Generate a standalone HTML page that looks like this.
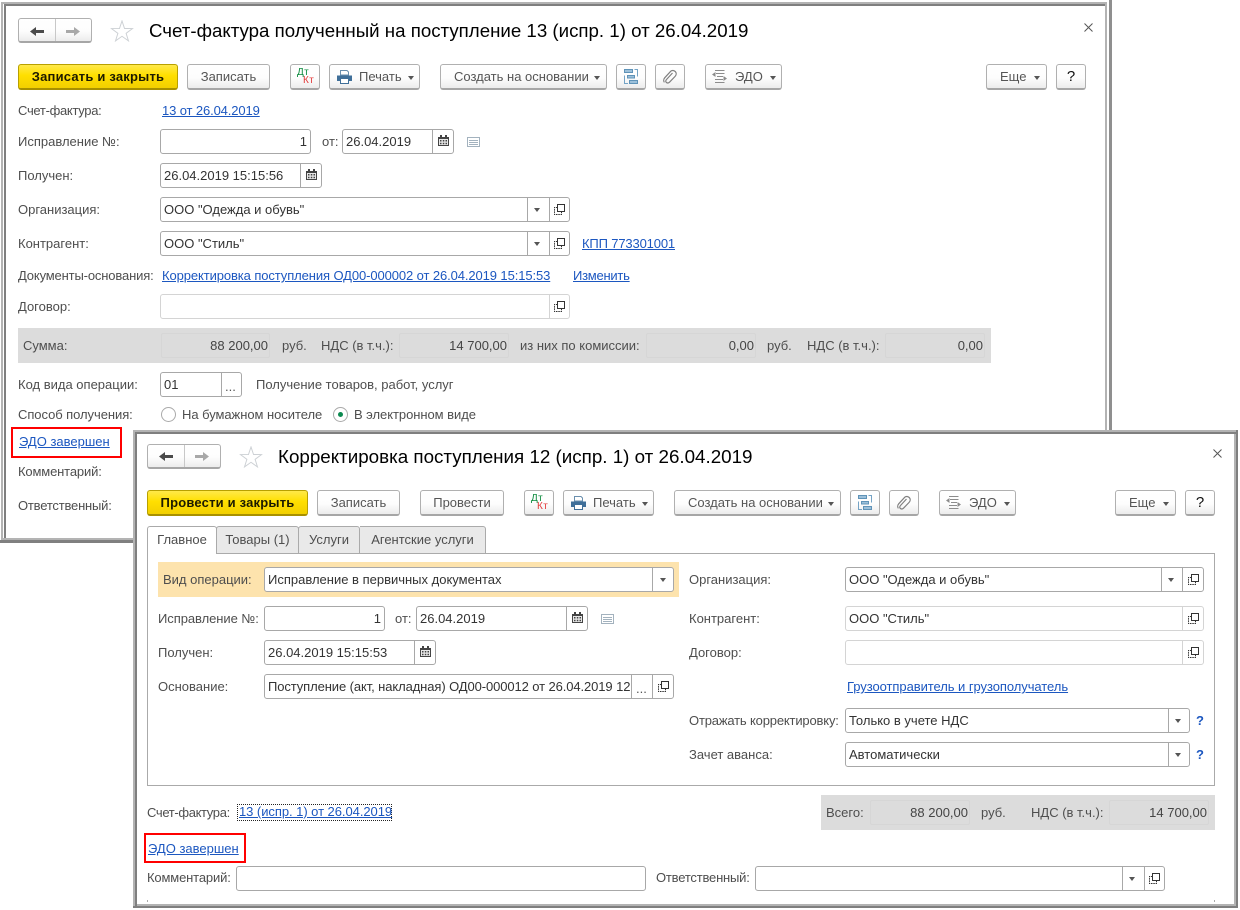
<!DOCTYPE html>
<html lang="ru"><head><meta charset="utf-8"><title>ЭДО</title>
<style>
html,body{margin:0;padding:0;background:#fff}
body{width:1240px;height:910px;position:relative;overflow:hidden;font:13px/16px "Liberation Sans",Arial,sans-serif;color:#4e4e4e}
div,a,span.t{position:absolute;box-sizing:border-box;white-space:nowrap}
svg{position:absolute;overflow:visible}
.r{position:absolute}
.t{height:16px;margin-top:1px}
.l{color:#1c57c0;text-decoration:underline;position:absolute;height:16px;white-space:nowrap;margin-top:1px}
.h{font-size:18.75px;line-height:22px;color:#000;height:22px;margin-top:0}
.b{height:26px;border:1px solid #b0b0b0;border-bottom:2px solid #a6a6a6;border-radius:3px;background:linear-gradient(#fff 0,#fdfdfd 55%,#ececec 100%);text-align:center;line-height:24px;color:#555}
.y{border-color:#b8a000;border-bottom-color:#a89000;background:linear-gradient(#ffe94a 0,#ffdf00 45%,#f2cf00 100%);color:#1c1a00;font-weight:bold;letter-spacing:.2px}
.q{font-size:15px;color:#111}
.i{height:25px;border:1px solid #a8a8a8;border-radius:3px;background:#fff;line-height:23px;color:#333;padding:0 3px;overflow:hidden}
.p{border-color:#d4d4d4}
.s{top:0;bottom:0;width:1px;background:#a8a8a8}
.a{width:0;height:0;border:3.5px solid transparent;border-top:4px solid #555;border-bottom:0}
.v{height:25px;border:1px solid #d6d6d6;border-radius:2px;background:#dcdcdc;line-height:23px;text-align:right;padding-right:1px;color:#444}
.g{background:#dcdcdc}
.red{border:2px solid #f00}
.dt{font:10px/10px "Liberation Sans",sans-serif;color:#0a8a3c;letter-spacing:.4px}
.kt{font:10px/10px "Liberation Sans",sans-serif;color:#e23a3a;letter-spacing:.4px}
</style></head><body>
<svg width="0" height="0" style="position:absolute"><defs>
<symbol id="star" viewBox="0 0 24 24"><path d="M12 1L14.650 8.860 22.940 8.950 16.280 13.890 18.760 21.800 12 17 5.240 21.800 7.720 13.890 1.060 8.950 9.350 8.860z" fill="#fff" stroke="#ccd0d4" stroke-width="1"/></symbol>
<symbol id="cal" viewBox="0 0 11 11"><path d="M0 2h11v9H0z" fill="#444"/><path d="M1 4h9v6H1z" fill="#e8e8e8"/><path d="M2 0h2v3H2zM7 0h2v3H7z" fill="#444"/><path d="M2 5h1.500v1.500H2zM4.800 5h1.500v1.500H4.800zM7.500 5H9v1.500H7.500zM2 7.800h1.500v1.500H2zM4.800 7.800h1.500v1.500H4.800zM7.500 7.800H9v1.500H7.500z" fill="#444"/></symbol>
<symbol id="memo" viewBox="0 0 13 10"><path d="M.5.500h12v9H.5z" fill="#fff" stroke="#a3b2be"/><path d="M2 3.500h9M2 5.500h9M2 7.500h9" stroke="#a3b2be"/></symbol>
<symbol id="open" viewBox="0 0 11 11"><path d="M3.500.5h7v7h-7z" fill="none" stroke="#333"/><path d="M3.500 3.500H.5v7h7v-3" fill="none" stroke="#333" stroke-dasharray="1.500 .8"/></symbol>
<symbol id="print" viewBox="0 0 15 14"><path d="M3.500.5h6.500l1.500 1.500v3h-8z" fill="#fff" stroke="#6a8fae"/><path d="M0 5.500h15v5.500H0z" fill="#3f6f99"/><path d="M3.500 8.500h8v5h-8z" fill="#fff" stroke="#3f6f99"/></symbol>
<symbol id="struct" viewBox="0 0 14 15"><path d="M10.500.5h3v7M.5 6.500v8h3.500" fill="none" stroke="#74a3c5"/><path d="M.5.500h8v3h-8zM5.500 11.500h8v3h-8z" fill="#9cc0da" stroke="#5f93b8"/><path d="M3.500 6.500h7v2.500h-7z" fill="#9cc0da" stroke="#5f93b8"/></symbol>
<symbol id="clip" viewBox="0 0 14 15"><path d="M9.500 4L3.500 10.500c-1 1-1 2.300-.1 3s2.200.6 3.100-.3L12 7.500c1.500-1.500 1.500-3.500.4-4.800S9 1 7.800 2.200L1.800 8.700c-1.500 1.700-1.300 3.600-.4 4.700" fill="none" stroke="#808080" stroke-width="1.200"/></symbol>
<symbol id="edo" viewBox="0 0 15 14"><path d="M3 .5h9.500M4 3.500h8.500M5 6.500h6M3 9.500h8M3 12.500h9.500" stroke="#8c8c8c"/><path d="M0 4.500L3.500 2v5zM15 8.500L11.500 6v5z" fill="#8c8c8c"/></symbol>
</defs></svg>

<!-- ОКНО 1 -->
<div style="left:1px;top:2px;width:1106px;height:538px;border:2px solid #b3b3b3;border-bottom:0"></div>
<div class="r" style="left:4px;top:4px;width:1101px;height:2px;background:#7f7f7f"></div>
<div class="r" style="left:4px;top:4px;width:2px;height:536px;background:#7f7f7f"></div>
<div class="r" style="left:1109px;top:0;width:3px;height:432px;background:#8f8f8f"></div>
<div class="r" style="left:1px;top:538px;width:132px;height:2px;background:#b3b3b3"></div>
<div class="r" style="left:0;top:540px;width:133px;height:3px;background:#808080"></div>

<div class="b" style="left:18px;top:18px;width:74px;height:25px"></div>
<div class="r" style="left:55px;top:19px;width:1px;height:22px;background:#c8c8c8"></div>
<svg style="left:30px;top:27px" width="14" height="9"><path d="M0 4.500L6 0v3h8v3H6v3z" fill="#4a4a4a"/></svg>
<svg style="left:66px;top:27px" width="14" height="9"><path d="M14 4.500L8 0v3H0v3h8v3z" fill="#a8a8a8"/></svg>
<svg style="left:110px;top:20px" width="24" height="23"><use href="#star"/></svg>
<span class="t h" style="left:149px;top:20px;font-size:18.69px">Счет-фактура полученный на поступление 13 (испр. 1) от 26.04.2019</span>
<svg style="left:1084px;top:23px" width="9" height="9"><path d="M.5.500l8 8M8.500.5l-8 8" stroke="#555"/></svg>

<div class="b y" style="left:18px;top:64px;width:160px">Записать и закрыть</div>
<div class="b" style="left:187px;top:64px;width:83px">Записать</div>
<div class="b" style="left:290px;top:64px;width:30px"></div>
<span class="t dt" style="left:297px;top:67px">Дт</span>
<span class="t kt" style="left:303px;top:75px">Кт</span>
<div class="b" style="left:329px;top:64px;width:91px;text-align:left;padding-left:29px">Печать</div>
<svg style="left:337px;top:70px" width="15" height="14"><use href="#print"/></svg>
<div class="a" style="left:408px;top:76px"></div>
<div class="b" style="left:440px;top:64px;width:167px;text-align:left;padding-left:13px">Создать на основании</div>
<div class="a" style="left:594px;top:76px"></div>
<div class="b" style="left:616px;top:64px;width:30px"></div>
<svg style="left:624px;top:69px" width="14" height="15"><use href="#struct"/></svg>
<div class="b" style="left:655px;top:64px;width:30px"></div>
<svg style="left:663px;top:69px" width="14" height="15"><use href="#clip"/></svg>
<div class="b" style="left:705px;top:64px;width:77px;text-align:left;padding-left:29px">ЭДО</div>
<svg style="left:712px;top:70px" width="15" height="14"><use href="#edo"/></svg>
<div class="a" style="left:770px;top:76px"></div>
<div class="b" style="left:986px;top:64px;width:61px;text-align:left;padding-left:13px">Еще</div>
<div class="a" style="left:1034px;top:76px"></div>
<div class="b q" style="left:1056px;top:64px;width:30px">?</div>

<span class="t" style="left:18px;top:102px;letter-spacing:-.3px">Счет-фактура:</span>
<a class="l" style="left:162px;top:102px;letter-spacing:-.12px">13 от 26.04.2019</a>

<span class="t" style="left:18px;top:133px">Исправление №:</span>
<div class="i" style="left:160px;top:129px;width:151px;text-align:right">1</div>
<span class="t" style="left:322px;top:133px">от:</span>
<div class="i" style="left:342px;top:129px;width:112px">26.04.2019<div class="s" style="left:89px"></div></div>
<svg style="left:438px;top:135px" width="11" height="11"><use href="#cal"/></svg>
<svg style="left:467px;top:137px" width="13" height="10"><use href="#memo"/></svg>

<span class="t" style="left:18px;top:167px">Получен:</span>
<div class="i" style="left:160px;top:163px;width:162px">26.04.2019 15:15:56<div class="s" style="left:139px"></div></div>
<svg style="left:306px;top:169px" width="11" height="11"><use href="#cal"/></svg>

<span class="t" style="left:18px;top:201px">Организация:</span>
<div class="i" style="left:160px;top:197px;width:410px">ООО "Одежда и обувь"<div class="s" style="left:366px"></div><div class="s" style="left:388px"></div></div>
<div class="a" style="left:534px;top:208px"></div>
<svg style="left:554px;top:204px" width="11" height="11"><use href="#open"/></svg>

<span class="t" style="left:18px;top:235px">Контрагент:</span>
<div class="i" style="left:160px;top:231px;width:410px">ООО "Стиль"<div class="s" style="left:366px"></div><div class="s" style="left:388px"></div></div>
<div class="a" style="left:534px;top:242px"></div>
<svg style="left:554px;top:238px" width="11" height="11"><use href="#open"/></svg>
<a class="l" style="left:582px;top:235px;letter-spacing:-.15px">КПП 773301001</a>

<span class="t" style="left:18px;top:267px;letter-spacing:-.15px">Документы-основания:</span>
<a class="l" style="left:162px;top:267px;letter-spacing:-.1px">Корректировка поступления ОД00-000002 от 26.04.2019 15:15:53</a>
<a class="l" style="left:573px;top:267px;letter-spacing:-.25px">Изменить</a>

<span class="t" style="left:18px;top:298px">Договор:</span>
<div class="i p" style="left:160px;top:294px;width:410px"><div class="s" style="left:388px;background:#d4d4d4"></div></div>
<svg style="left:554px;top:301px" width="11" height="11"><use href="#open"/></svg>

<div class="g" style="left:18px;top:328px;width:973px;height:35px"></div>
<span class="t" style="left:23px;top:337px">Сумма:</span>
<div class="v" style="left:161px;top:333px;width:109px">88 200,00</div>
<span class="t" style="left:282px;top:337px">руб.</span>
<span class="t" style="left:321px;top:337px">НДС (в т.ч.):</span>
<div class="v" style="left:399px;top:333px;width:110px">14 700,00</div>
<span class="t" style="left:520px;top:337px">из них по комиссии:</span>
<div class="v" style="left:646px;top:333px;width:110px">0,00</div>
<span class="t" style="left:767px;top:337px">руб.</span>
<span class="t" style="left:807px;top:337px">НДС (в т.ч.):</span>
<div class="v" style="left:885px;top:333px;width:100px">0,00</div>

<span class="t" style="left:18px;top:376px">Код вида операции:</span>
<div class="i" style="left:160px;top:372px;width:82px">01<div class="s" style="left:60px"></div></div>
<span class="t" style="left:225px;top:378px;color:#555">...</span>
<span class="t" style="left:256px;top:376px">Получение товаров, работ, услуг</span>

<span class="t" style="left:18px;top:406px;letter-spacing:-.06px">Способ получения:</span>
<div class="r" style="left:161px;top:407px;width:15px;height:15px;border:1px solid #aaa;border-radius:50%"></div>
<span class="t" style="left:182px;top:406px;letter-spacing:-.05px">На бумажном носителе</span>
<div class="r" style="left:333px;top:407px;width:15px;height:15px;border:1px solid #aaa;border-radius:50%"></div>
<div class="r" style="left:338px;top:412px;width:5px;height:5px;background:#0c8a50;border-radius:50%"></div>
<span class="t" style="left:354px;top:406px;letter-spacing:-.05px">В электронном виде</span>

<div class="red" style="left:11px;top:427px;width:111px;height:31px"></div>
<a class="l" style="left:19px;top:433px">ЭДО завершен</a>
<span class="t" style="left:18px;top:463px;letter-spacing:-.15px">Комментарий:</span>
<span class="t" style="left:18px;top:497px;letter-spacing:-.2px">Ответственный:</span>

<!-- ОКНО 2 -->
<div style="left:133px;top:430px;width:1105px;height:478px;background:#fff;border:2px solid #b3b3b3"></div>
<div class="r" style="left:135px;top:432px;width:1103px;height:2px;background:#7f7f7f"></div>
<div class="r" style="left:135px;top:432px;width:2px;height:476px;background:#7f7f7f"></div>
<div class="r" style="left:1236px;top:430px;width:2px;height:478px;background:#7f7f7f"></div>
<div class="r" style="left:133px;top:906px;width:1105px;height:2px;background:#7f7f7f"></div>
<div class="r" style="left:1234px;top:434px;width:2px;height:472px;background:#b3b3b3"></div>
<div class="r" style="left:137px;top:904px;width:1099px;height:2px;background:#b3b3b3"></div>

<div class="b" style="left:147px;top:444px;width:74px;height:25px"></div>
<div class="r" style="left:184px;top:445px;width:1px;height:22px;background:#c8c8c8"></div>
<svg style="left:159px;top:452px" width="14" height="9"><path d="M0 4.500L6 0v3h8v3H6v3z" fill="#4a4a4a"/></svg>
<svg style="left:195px;top:452px" width="14" height="9"><path d="M14 4.500L8 0v3H0v3h8v3z" fill="#a8a8a8"/></svg>
<svg style="left:239px;top:446px" width="24" height="23"><use href="#star"/></svg>
<span class="t h" style="left:278px;top:446px;font-size:18.8px">Корректировка поступления 12 (испр. 1) от 26.04.2019</span>
<svg style="left:1213px;top:449px" width="9" height="9"><path d="M.5.500l8 8M8.500.5l-8 8" stroke="#555"/></svg>

<div class="b y" style="left:147px;top:490px;width:161px">Провести и закрыть</div>
<div class="b" style="left:317px;top:490px;width:83px">Записать</div>
<div class="b" style="left:420px;top:490px;width:84px">Провести</div>
<div class="b" style="left:524px;top:490px;width:30px"></div>
<span class="t dt" style="left:531px;top:493px">Дт</span>
<span class="t kt" style="left:537px;top:501px">Кт</span>
<div class="b" style="left:563px;top:490px;width:91px;text-align:left;padding-left:29px">Печать</div>
<svg style="left:571px;top:496px" width="15" height="14"><use href="#print"/></svg>
<div class="a" style="left:642px;top:502px"></div>
<div class="b" style="left:674px;top:490px;width:167px;text-align:left;padding-left:13px">Создать на основании</div>
<div class="a" style="left:828px;top:502px"></div>
<div class="b" style="left:850px;top:490px;width:30px"></div>
<svg style="left:858px;top:495px" width="14" height="15"><use href="#struct"/></svg>
<div class="b" style="left:889px;top:490px;width:30px"></div>
<svg style="left:897px;top:495px" width="14" height="15"><use href="#clip"/></svg>
<div class="b" style="left:939px;top:490px;width:77px;text-align:left;padding-left:29px">ЭДО</div>
<svg style="left:946px;top:496px" width="15" height="14"><use href="#edo"/></svg>
<div class="a" style="left:1004px;top:502px"></div>
<div class="b" style="left:1115px;top:490px;width:61px;text-align:left;padding-left:13px">Еще</div>
<div class="a" style="left:1163px;top:502px"></div>
<div class="b q" style="left:1185px;top:490px;width:30px">?</div>

<div class="r" style="left:147px;top:553px;width:1068px;height:233px;border:1px solid #aaa"></div>
<div class="r" style="left:216px;top:526px;width:83px;height:28px;background:#e9e9e9;border:1px solid #aaa;border-radius:3px 3px 0 0;text-align:center;line-height:25px">Товары (1)</div>
<div class="r" style="left:298px;top:526px;width:62px;height:28px;background:#e9e9e9;border:1px solid #aaa;border-radius:3px 3px 0 0;text-align:center;line-height:25px">Услуги</div>
<div class="r" style="left:360px;top:526px;width:126px;height:28px;background:#e9e9e9;border:1px solid #aaa;border-left:0;border-radius:0 3px 0 0;text-align:center;line-height:25px">Агентские услуги</div>
<div class="r" style="left:147px;top:526px;width:70px;height:28px;background:#fff;border:1px solid #aaa;border-bottom:0;border-radius:3px 3px 0 0;text-align:center;line-height:25px">Главное</div>

<div class="r" style="left:158px;top:562px;width:521px;height:35px;background:#fde3ad"></div>
<span class="t" style="left:163px;top:571px">Вид операции:</span>
<div class="i" style="left:264px;top:567px;width:410px">Исправление в первичных документах<div class="s" style="left:387px"></div></div>
<div class="a" style="left:660px;top:578px"></div>
<span class="t" style="left:689px;top:571px">Организация:</span>
<div class="i" style="left:845px;top:567px;width:359px">ООО "Одежда и обувь"<div class="s" style="left:315px"></div><div class="s" style="left:336px"></div></div>
<div class="a" style="left:1168px;top:578px"></div>
<svg style="left:1188px;top:574px" width="11" height="11"><use href="#open"/></svg>

<span class="t" style="left:158px;top:610px;letter-spacing:-.06px">Исправление №:</span>
<div class="i" style="left:264px;top:606px;width:121px;text-align:right">1</div>
<span class="t" style="left:395px;top:610px">от:</span>
<div class="i" style="left:416px;top:606px;width:172px">26.04.2019<div class="s" style="left:149px"></div></div>
<svg style="left:572px;top:612px" width="11" height="11"><use href="#cal"/></svg>
<svg style="left:601px;top:614px" width="13" height="10"><use href="#memo"/></svg>
<span class="t" style="left:689px;top:610px">Контрагент:</span>
<div class="i p" style="left:845px;top:606px;width:359px">ООО "Стиль"<div class="s" style="left:336px;background:#d4d4d4"></div></div>
<svg style="left:1188px;top:613px" width="11" height="11"><use href="#open"/></svg>

<span class="t" style="left:158px;top:644px">Получен:</span>
<div class="i" style="left:264px;top:640px;width:172px">26.04.2019 15:15:53<div class="s" style="left:149px"></div></div>
<svg style="left:420px;top:646px" width="11" height="11"><use href="#cal"/></svg>
<span class="t" style="left:689px;top:644px">Договор:</span>
<div class="i p" style="left:845px;top:640px;width:359px"><div class="s" style="left:336px;background:#d4d4d4"></div></div>
<svg style="left:1188px;top:647px" width="11" height="11"><use href="#open"/></svg>

<span class="t" style="left:158px;top:678px">Основание:</span>
<div class="i" style="left:264px;top:674px;width:410px"><span style="display:block;width:363px;overflow:hidden;letter-spacing:-.1px">Поступление (акт, накладная) ОД00-000012 от 26.04.2019 12:00:00</span><div class="s" style="left:366px"></div><div class="s" style="left:387px"></div></div>
<span class="t" style="left:636px;top:680px;color:#555">...</span>
<svg style="left:658px;top:681px" width="11" height="11"><use href="#open"/></svg>
<a class="l" style="left:847px;top:678px;letter-spacing:-.06px">Грузоотправитель и грузополучатель</a>

<span class="t" style="left:689px;top:712px;letter-spacing:-.17px">Отражать корректировку:</span>
<div class="i" style="left:845px;top:708px;width:345px">Только в учете НДС<div class="s" style="left:322px"></div></div>
<div class="a" style="left:1175px;top:719px"></div>
<span class="t" style="left:1196px;top:712px;color:#1c57c0;font-weight:bold">?</span>
<span class="t" style="left:689px;top:746px">Зачет аванса:</span>
<div class="i" style="left:845px;top:742px;width:345px">Автоматически<div class="s" style="left:322px"></div></div>
<div class="a" style="left:1175px;top:753px"></div>
<span class="t" style="left:1196px;top:746px;color:#1c57c0;font-weight:bold">?</span>

<span class="t" style="left:147px;top:804px;letter-spacing:-.35px">Счет-фактура:</span>
<div class="r" style="left:237px;top:804px;width:155px;height:17px;border:1px dotted #222"></div>
<a class="l" style="left:239px;top:803px;letter-spacing:-.05px">13 (испр. 1) от 26.04.2019</a>
<div class="g" style="left:821px;top:795px;width:394px;height:35px"></div>
<span class="t" style="left:826px;top:804px">Всего:</span>
<div class="v" style="left:870px;top:800px;width:100px">88 200,00</div>
<span class="t" style="left:981px;top:804px">руб.</span>
<span class="t" style="left:1031px;top:804px">НДС (в т.ч.):</span>
<div class="v" style="left:1109px;top:800px;width:100px">14 700,00</div>

<div class="red" style="left:144px;top:833px;width:102px;height:30px"></div>
<a class="l" style="left:148px;top:840px">ЭДО завершен</a>

<span class="t" style="left:147px;top:869px;letter-spacing:-.15px">Комментарий:</span>
<div class="i" style="left:236px;top:866px;width:410px"></div>
<span class="t" style="left:656px;top:869px;letter-spacing:-.2px">Ответственный:</span>
<div class="i" style="left:755px;top:866px;width:410px"><div class="s" style="left:366px"></div><div class="s" style="left:388px"></div></div>
<div class="a" style="left:1129px;top:877px"></div>
<svg style="left:1149px;top:873px" width="11" height="11"><use href="#open"/></svg>
<div class="r" style="left:147px;top:900px;width:1px;height:2px;background:#aaa"></div>
<div class="r" style="left:1214px;top:900px;width:1px;height:2px;background:#aaa"></div>
</body></html>
